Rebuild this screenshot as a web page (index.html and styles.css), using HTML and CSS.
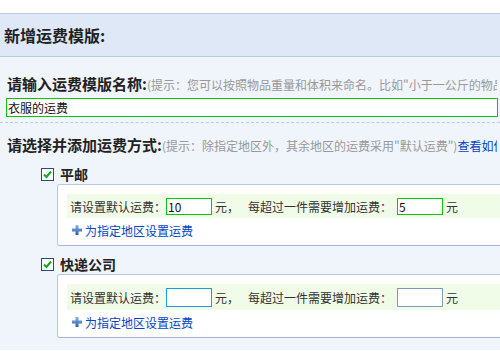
FILE: index.html
```html
<!DOCTYPE html>
<html lang="zh-CN">
<head>
    <meta charset="UTF-8">
    <title>新增运费模版</title>
    <link rel="stylesheet" href="styles.css">
</head>
<body>
    <div class="hd">
        <h2>新增运费模版:</h2>
    </div>
    <div class="bd">
        <div class="field">
            <div class="label"><b>请输入运费模版名称:</b><span class="tip">(提示：您可以按照物品重量和体积来命名。比如"小于一公斤的物品")</span></div>
            <input type="text" class="name" value="衣服的运费">
        </div>
        <div class="sep"></div>
        <div class="field">
            <div class="label"><b>请选择并添加运费方式:</b><span class="tip">(提示：除指定地区外，其余地区的运费采用"默认运费")</span><a href="#">查看如何设置</a></div>

            <div class="way">
                <div class="way-name"><span class="check"><svg width="11" height="11" viewBox="0 0 11 11"><path d="M2 5.5 L4.5 8 L9 2.5" fill="none" stroke="#19a51d" stroke-width="2"/></svg></span>平邮</div>
                <div class="way-box">
                    <div class="default">
                        <span>请设置默认运费：</span><input type="text" class="fee ok" value="10"><span class="unit">元，</span>
                        <span class="more">每超过一件需要增加运费：</span><input type="text" class="fee ok" value="5"><span class="unit">元</span>
                    </div>
                    <a href="#" class="add"><svg width="10" height="10" viewBox="0 0 10 10"><defs><linearGradient id="pg1" x1="0" y1="0" x2="0" y2="1"><stop offset="0" stop-color="#8ab4e6"/><stop offset="1" stop-color="#2a5fa8"/></linearGradient></defs><path d="M3.5 0h3v3.5h3.5v3h-3.5v3.5h-3v-3.5h-3.5v-3h3.5z" fill="url(#pg1)"/></svg>为指定地区设置运费</a>
                </div>
            </div>

            <div class="way">
                <div class="way-name"><span class="check"><svg width="11" height="11" viewBox="0 0 11 11"><path d="M2 5.5 L4.5 8 L9 2.5" fill="none" stroke="#19a51d" stroke-width="2"/></svg></span>快递公司</div>
                <div class="way-box">
                    <div class="default tall">
                        <span>请设置默认运费：</span><input type="text" class="fee focus" value=""><span class="unit">元，</span>
                        <span class="more">每超过一件需要增加运费：</span><input type="text" class="fee" value=""><span class="unit">元</span>
                    </div>
                    <a href="#" class="add"><svg width="10" height="10" viewBox="0 0 10 10"><defs><linearGradient id="pg2" x1="0" y1="0" x2="0" y2="1"><stop offset="0" stop-color="#8ab4e6"/><stop offset="1" stop-color="#2a5fa8"/></linearGradient></defs><path d="M3.5 0h3v3.5h3.5v3h-3.5v3.5h-3v-3.5h-3.5v-3h3.5z" fill="url(#pg2)"/></svg>为指定地区设置运费</a>
                </div>
            </div>
        </div>
    </div>
</body>
</html>
```

FILE: styles.css
```css
html, body {
    height: 100%;
}
body {
    margin: 0;
    background: #fff;
    font-family: "Noto Sans CJK SC", "Liberation Sans", sans-serif;
    font-size: 12px;
    color: #333;
    overflow: hidden;
    white-space: nowrap;
}
.hd {
    margin-top: 13px;
    height: 42px;
    background: #dfe8f6;
    border-top: 1px solid #b8cce4;
    border-bottom: 1px solid #b8cce4;
}
.hd h2 {
    margin: 0;
    padding-left: 4px;
    font-size: 16px;
    line-height: 42px;
    color: #222;
}
.bd {
    background: #f0f4fb;
    padding-top: 17px;
    height: calc(100% - 75px);
    overflow: hidden;
}
.field {
    padding: 0 3px 0 6px;
}
.label {
    line-height: 20px;
    height: 20px;
    overflow: hidden;
}
.label b {
    font-size: 15px;
    color: #222;
    padding-left: 1px;
}
.tip {
    color: #999;
}
a {
    color: #0043c8;
    text-decoration: none;
}
input[type="text"] {
    box-sizing: border-box;
    margin: 0;
    padding: 0 1px;
    font-family: inherit;
    font-size: 12px;
    color: #111;
    background: #fff;
    outline: none;
}
.name {
    display: block;
    margin-top: 4px !important;
    width: 492px;
    height: 19px;
    border: 1px solid #0bc40b;
}
.sep {
    margin-top: 5px;
    border-bottom: 1px dashed #b8cce4;
}
.sep + .field {
    padding-top: 12px;
}
.way-name {
    margin-top: 9px;
    padding-left: 35px;
    display: flex;
    align-items: center;
    height: 20px;
    font-size: 14px;
    font-weight: bold;
    color: #222;
}
.way + .way .way-name {
    margin-top: 8px;
}
.check {
    box-sizing: border-box;
    width: 13px;
    height: 13px;
    margin-right: 6px;
    border: 1px solid #1c5180;
    background: #fff;
    display: flex;
    align-items: center;
    justify-content: center;
}
.way-box {
    margin-left: 51px;
    width: 480px;
    background: #fff;
    border: 1px solid #b8c8e0;
    border-bottom-color: #a4b8d6;
    border-radius: 3px;
    padding: 9px 0 5px 9px;
}
.default {
    display: flex;
    align-items: center;
    height: 24px;
    padding-left: 3px;
    background: #f0fce8;
    color: #333;
}
.default.tall {
    height: 26px;
}
.fee {
    width: 46px;
    height: 17px;
    border: 1px solid #7f9db9;
}
.tall .fee {
    height: 19px;
}
.fee.ok {
    border-color: #0bc40b;
}
.fee.focus {
    border-color: #1e9be8;
}
.unit {
    margin-left: 3px;
}
.more {
    margin-left: 9px;
    margin-right: 5px;
}
.add {
    display: flex;
    align-items: center;
    margin-top: 2px;
    height: 20px;
    padding-left: 5px;
}
.add svg {
    margin-right: 3px;
}
```
